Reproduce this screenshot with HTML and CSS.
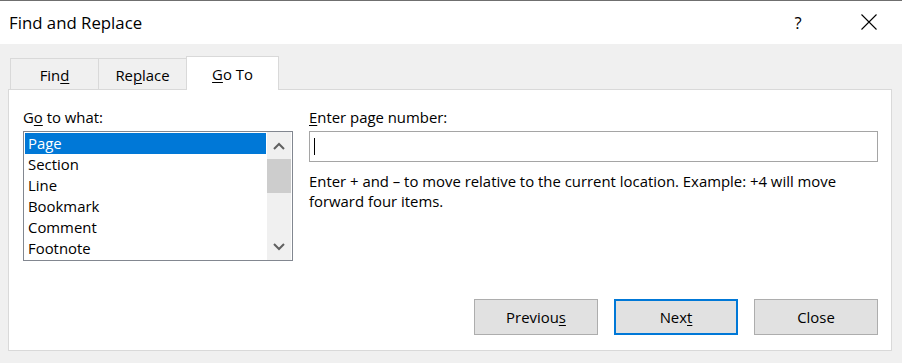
FILE: index.html
```html
<!DOCTYPE html>
<html>
<head>
<meta charset="utf-8">
<link rel="stylesheet" href="styles.css">
</head>
<body>
<div class="window">
  <div class="titlebar">
    <div class="title">Find and Replace</div>
    <div class="help">?</div>
    <div class="close">
      <svg width="16" height="16" viewBox="0 0 16 16"><path d="M0.5 0.5 L15.5 15.5 M15.5 0.5 L0.5 15.5" stroke="#000" stroke-width="1.1" fill="none"/></svg>
    </div>
  </div>
  <div class="body">
    <div class="tabs">
      <div class="tab tab-find">Fin<u>d</u></div>
      <div class="tab tab-replace">Re<u>p</u>lace</div>
      <div class="tab tab-goto active"><u>G</u>o To</div>
    </div>
    <div class="panel">
      <div class="cols">
        <div class="left">
          <div class="label">G<u>o</u> to what:</div>
          <div class="listbox">
            <div class="items">
              <div class="item selected">Page</div>
              <div class="item">Section</div>
              <div class="item">Line</div>
              <div class="item">Bookmark</div>
              <div class="item">Comment</div>
              <div class="item">Footnote</div>
            </div>
            <div class="scrollbar">
              <div class="arrow">
                <svg width="12" height="8" viewBox="0 0 12 8"><path d="M1 7 L6 2 L11 7" stroke="#606060" stroke-width="2" fill="none"/></svg>
              </div>
              <div class="thumb"></div>
              <div class="track"></div>
              <div class="arrow">
                <svg width="12" height="8" viewBox="0 0 12 8"><path d="M1 1 L6 6 L11 1" stroke="#606060" stroke-width="2" fill="none"/></svg>
              </div>
            </div>
          </div>
        </div>
        <div class="right">
          <div class="label"><u>E</u>nter page number:</div>
          <div class="input"><span class="caret"></span></div>
          <div class="hint">Enter + and – to move relative to the current location. Example: +4 will move forward four items.</div>
        </div>
      </div>
      <div class="buttons">
        <div class="btn">Previou<u>s</u></div>
        <div class="btn default">Nex<u>t</u></div>
        <div class="btn">Close</div>
      </div>
    </div>
  </div>
</div>
</body>
</html>
```

FILE: styles.css
```css
html, body {
  margin: 0;
  padding: 0;
}
body {
  width: 902px;
  height: 363px;
  overflow: hidden;
  background: #f0f0f0;
  font-family: "Open Sans", "Noto Sans", sans-serif;
  font-size: 14.9px;
  color: #000;
}
u {
  text-decoration: underline;
  text-underline-offset: 2px;
  text-decoration-thickness: 1px;
}
.window {
  border-top: 1px solid #6f6f6f;
  height: 362px;
  display: flex;
  flex-direction: column;
}
.titlebar {
  height: 43px;
  background: #fff;
  display: flex;
  align-items: center;
  padding-left: 9px;
}
.title {
  font-size: 16.8px;
  flex: 1;
  margin-top: -1px;
}
.help {
  font-size: 16.5px;
  width: 20px;
  text-align: center;
  margin-right: 53px;
}
.close {
  width: 16px;
  height: 16px;
  margin-right: 25px;
  margin-top: -2px;
}
.close svg {
  display: block;
}
.body {
  flex: 1;
  padding: 12px 10px 0 8px;
  display: flex;
  flex-direction: column;
}
.tabs {
  display: flex;
  align-items: flex-end;
  padding-left: 2px;
  height: 33px;
  position: relative;
  z-index: 1;
}
.tab {
  height: 31px;
  box-sizing: border-box;
  border: 1px solid #d9d9d9;
  border-bottom: none;
  display: flex;
  align-items: center;
  justify-content: center;
  background: #f0f0f0;
  padding-top: 2px;
}
.tab-find {
  width: 88px;
  border-right: none;
}
.tab-replace {
  width: 89px;
}
.tab-goto {
  width: 93px;
  margin-left: -1px;
}
.tab.active {
  height: 34px;
  background: #fff;
  margin-bottom: -1px;
  padding-top: 0;
}
.panel {
  height: 262px;
  box-sizing: border-box;
  background: #fff;
  border: 1px solid #d9d9d9;
  padding: 17px 13px 15px 14px;
  display: flex;
  flex-direction: column;
}
.cols {
  display: flex;
  gap: 16px;
  flex: 1;
}
.label {
  line-height: 20px;
  height: 20px;
  margin-bottom: 4px;
}
.left {
  width: 270px;
}
.listbox {
  width: 270px;
  height: 130px;
  box-sizing: border-box;
  border: 1px solid #828790;
  padding: 1px;
  display: flex;
}
.items {
  flex: 1;
}
.item {
  height: 21px;
  line-height: 21px;
  padding-left: 3px;
}
.item.selected {
  background: #0078d7;
  color: #fff;
}
.scrollbar {
  width: 24px;
  margin-left: 1px;
  background: #f0f0f0;
  display: flex;
  flex-direction: column;
  margin-top: -1px;
  margin-bottom: -1px;
}
.arrow {
  height: 27px;
  display: flex;
  align-items: center;
  justify-content: center;
}
.thumb {
  height: 34px;
  background: #cdcdcd;
}
.track {
  flex: 1;
}
.right {
  flex: 1;
}
.input {
  height: 31px;
  box-sizing: border-box;
  border: 1px solid #a5a5a5;
  display: flex;
  align-items: center;
  padding-left: 4px;
}
.caret {
  width: 1px;
  height: 17px;
  background: #000;
}
.hint {
  margin-top: 9px;
  line-height: 20px;
  padding-right: 20px;
}
.buttons {
  display: flex;
  justify-content: flex-end;
  gap: 16px;
}
.btn {
  width: 124px;
  height: 36px;
  box-sizing: border-box;
  border: 1px solid #adadad;
  background: #e1e1e1;
  display: flex;
  align-items: center;
  justify-content: center;
}
.btn.default {
  border: 2px solid #0078d7;
}
```
